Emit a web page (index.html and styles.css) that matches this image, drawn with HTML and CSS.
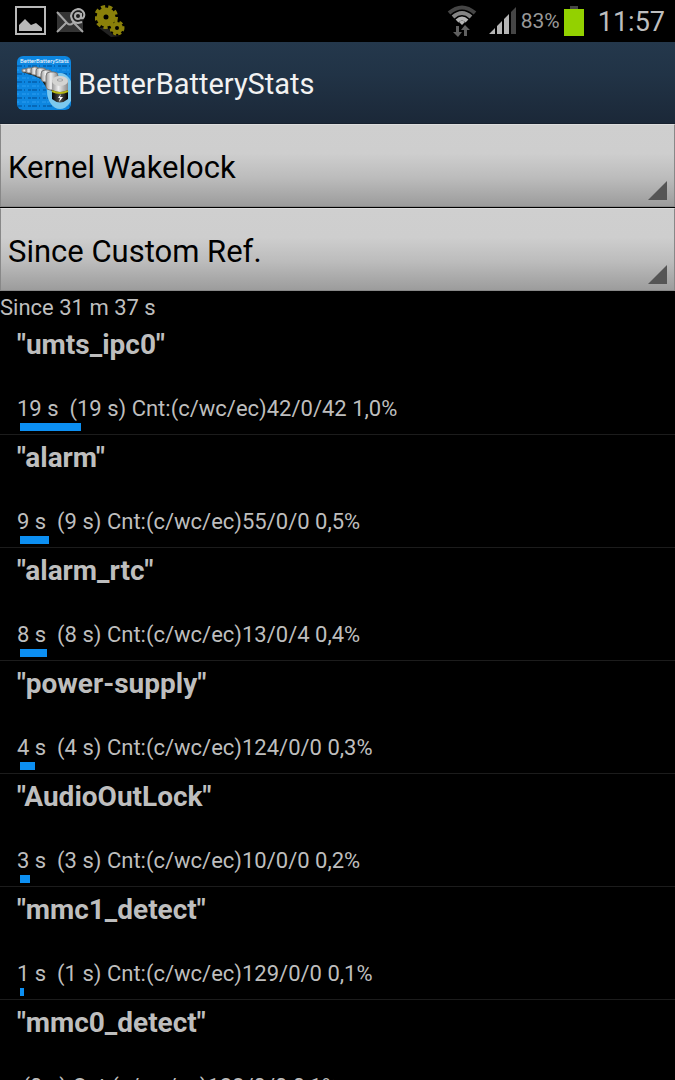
FILE: index.html
```html
<!DOCTYPE html>
<html lang="en">
<head>
  <meta charset="UTF-8">
  <meta name="viewport" content="width=device-width, initial-scale=1">
  <title>BetterBatteryStats</title>
  <link rel="stylesheet" href="styles.css">
</head>
<body>

  <!-- Status bar -->
  <div class="status-bar">
    <div class="notifications">
      <svg width="32" height="30" viewBox="0 0 32 30">
        <rect x="1" y="1" width="29" height="27" fill="none" stroke="#b9b9b9" stroke-width="2"/>
        <path d="M4 25V19L10 13L16 19L21 17L27 22V25Z" fill="#b9b9b9"/>
      </svg>
      <svg width="30" height="26" viewBox="0 0 30 26">
        <path d="M1 4H27V24H1Z" fill="#343434"/>
        <path d="M1 4L11 15Q14 18 17 15L19 13M1 24L10 15M27 24L18 15" fill="none" stroke="#a5a5a5" stroke-width="2"/>
        <circle cx="22" cy="8" r="7" fill="#1c1c1c"/>
        <circle cx="22" cy="8" r="3" fill="none" stroke="#b0b0b0" stroke-width="2"/>
        <path d="M25 5V9Q25 11 27 10Q29 8 28 5Q26 1 22 1Q16 2 15 8Q16 15 22 15L26 14" fill="none" stroke="#b0b0b0" stroke-width="2"/>
      </svg>
      <svg width="30" height="32" viewBox="0 0 30 32">
        <path d="M4 23L12 22L18 30L26 31L16 32Z" fill="#222"/>
        <circle cx="11" cy="12" r="6" fill="none" stroke="#8a800a" stroke-width="7"/>
        <circle cx="11" cy="12" r="10" fill="none" stroke="#8a800a" stroke-width="4" stroke-dasharray="4 3"/>
        <circle cx="22" cy="23" r="4" fill="none" stroke="#8a800a" stroke-width="4"/>
        <circle cx="22" cy="23" r="6" fill="none" stroke="#8a800a" stroke-width="3" stroke-dasharray="3 2"/>
      </svg>
    </div>
    <div class="indicators">
      <svg class="wifi" width="30" height="32" viewBox="0 0 30 32">
        <g fill="none" stroke-width="4">
          <path d="M2 8Q15 -3 28 8" stroke="#454545"/>
          <path d="M6 12Q15 4 24 12" stroke="#858585"/>
          <path d="M10 16Q15 11 20 16" stroke="#b5b5b5"/>
        </g>
        <path d="M12 17L15 20L18 17Q15 14 12 17Z" fill="#b5b5b5"/>
        <path d="M9 21H12V27H15L11 32L6 27H9ZM17 31V25H14L18 20L23 25H20V31Z" fill="#606060"/>
      </svg>
      <svg class="signal" width="28" height="28" viewBox="0 0 28 28">
        <path d="M0 27L6 21V27ZM8 19L13 14V27H8ZM15 12L20 7V27H15Z" fill="#b5b5b5"/>
        <path d="M22 5L27 0V27H22Z" fill="#454545"/>
      </svg>
      <span class="percent">83%</span>
      <svg class="battery" width="20" height="30" viewBox="0 0 20 30">
        <rect x="6" y="0" width="8" height="3" fill="#454545"/>
        <rect x="0" y="3" width="20" height="27" fill="#93d100"/>
      </svg>
      <span class="clock">11:57</span>
    </div>
  </div>

  <!-- Title bar -->
  <header class="title-bar">
    <svg class="app-icon" width="54" height="54" viewBox="0 0 54 54">
      <defs>
        <linearGradient id="metal" x1="0" x2="1" y1="0" y2="0">
          <stop offset="0" stop-color="#999"/>
          <stop offset="0.4" stop-color="#eee"/>
          <stop offset="1" stop-color="#888"/>
        </linearGradient>
        <linearGradient id="cell" x1="0" x2="1" y1="0" y2="0">
          <stop offset="0" stop-color="#000"/>
          <stop offset="0.5" stop-color="#555"/>
          <stop offset="1" stop-color="#000"/>
        </linearGradient>
        <clipPath id="tile"><rect width="54" height="54" rx="6"/></clipPath>
      </defs>
      <g clip-path="url(#tile)">
        <rect width="54" height="54" fill="#0d86e0"/>
        <path d="M0 10H54M0 18H54M0 26H54M0 34H54M0 42H54M0 50H54" stroke="#0668b8" stroke-width="2" stroke-dasharray="5 2 1 3 3 1"/>
        <path d="M0 14H54M0 22H54M0 30H54M0 38H54M0 46H54" stroke="#2c9df0" stroke-width="1" stroke-dasharray="2 3 4 1"/>
        <ellipse cx="43" cy="35" rx="13" ry="18" fill="#7cc8ee"/>
        <!-- row of cells, growing towards the front one -->
        <path d="M5 16L15 19L24 23L29 31L35 35V20L22 12L6 13Z" fill="#161c14"/>
        <g fill="url(#metal)" stroke="#777" stroke-width="1">
          <rect x="5" y="13" width="6" height="3" rx="1"/>
          <rect x="9" y="12" width="7" height="5" rx="2"/>
          <rect x="14" y="11" width="8" height="8" rx="3"/>
          <rect x="19" y="12" width="10" height="9" rx="3"/>
          <rect x="24" y="14" width="11" height="12" rx="4"/>
          <rect x="29" y="16" width="12" height="18" rx="4"/>
        </g>
        <path d="M35 25V43Q43 50 51 43V25Z" fill="url(#cell)"/>
        <path d="M35 24V34Q43 38 51 34V24Z" fill="url(#metal)"/>
        <path d="M35 35Q43 39 51 35" fill="none" stroke="#b5b614" stroke-width="2"/>
        <ellipse cx="43" cy="25" rx="8" ry="5" fill="#d4d4d2"/>
        <ellipse cx="43" cy="24" rx="3" ry="1" fill="#fff" stroke="#999"/>
        <path d="M44 38L41 42H43L42 46L46 41H43Z" fill="#fff"/>
        <text class="icon-label" x="3" y="7">BetterBatteryStats</text>
      </g>
    </svg>
    <h1>BetterBatteryStats</h1>
  </header>

  <!-- Filters -->
  <div class="filters">
    <div class="spinner">
      <select aria-label="Statistic">
        <option>Kernel Wakelock</option>
      </select>
    </div>
    <div class="spinner">
      <select aria-label="Reference">
        <option>Since Custom Ref.</option>
      </select>
    </div>
  </div>

  <p class="since">Since 31 m 37 s</p>

  <ul class="stats">
    <li>
      <h2>"umts_ipc0"</h2>
      <p>19 s&nbsp; (19 s) Cnt:(c/wc/ec)42/0/42 1,0%</p>
      <div class="bar" style="width: 61px"></div>
    </li>
    <li>
      <h2>"alarm"</h2>
      <p>9 s&nbsp; (9 s) Cnt:(c/wc/ec)55/0/0 0,5%</p>
      <div class="bar" style="width: 29px"></div>
    </li>
    <li>
      <h2>"alarm_rtc"</h2>
      <p>8 s&nbsp; (8 s) Cnt:(c/wc/ec)13/0/4 0,4%</p>
      <div class="bar" style="width: 27px"></div>
    </li>
    <li>
      <h2>"power-supply"</h2>
      <p>4 s&nbsp; (4 s) Cnt:(c/wc/ec)124/0/0 0,3%</p>
      <div class="bar" style="width: 15px"></div>
    </li>
    <li>
      <h2>"AudioOutLock"</h2>
      <p>3 s&nbsp; (3 s) Cnt:(c/wc/ec)10/0/0 0,2%</p>
      <div class="bar" style="width: 10px"></div>
    </li>
    <li>
      <h2>"mmc1_detect"</h2>
      <p>1 s&nbsp; (1 s) Cnt:(c/wc/ec)129/0/0 0,1%</p>
      <div class="bar" style="width: 4px"></div>
    </li>
    <li>
      <h2>"mmc0_detect"</h2>
      <p>&nbsp;(0 s) Cnt:(c/wc/ec)128/0/0 0,1%</p>
      <div class="bar" style="width: 2px"></div>
    </li>
  </ul>

</body>
</html>
```

FILE: styles.css
```css
* {
  box-sizing: border-box;
}

body {
  display: flex;
  flex-direction: column;
  height: 100vh;
  margin: 0;
  background-color: #000;
  color: #bebebe;
  font-family: Roboto, sans-serif;
  overflow: hidden;
}

h1, h2, p, ul {
  margin: 0;
  padding: 0;
  font-weight: normal;
}

.status-bar {
  display: flex;
  flex-shrink: 0;
  justify-content: space-between;
  align-items: center;
  height: 42px;
  padding: 0 10px 0 15px;
}

.notifications,
.indicators {
  display: flex;
  align-items: center;
}

.notifications {
  gap: 9px;
}

.wifi {
  margin-right: 12px;
}

.percent {
  margin: 0 4px;
  color: #999;
  font-size: 21px;
}

.clock {
  margin-left: 14px;
  padding-top: 2px;
  font-size: 27px;
}

.title-bar {
  display: flex;
  flex-shrink: 0;
  align-items: center;
  gap: 7px;
  height: 82px;
  padding: 0 17px;
  background: linear-gradient(#24384c, #213346 40%, #1b2838);
  border-bottom: 1px solid #17212e;
}

.title-bar h1 {
  padding-top: 2px;
  color: #f2f2f2;
  font-size: 29px;
}

.icon-label {
  fill: #fff;
  font-size: 6px;
}

.filters {
  display: flex;
  flex-direction: column;
  flex-shrink: 0;
  gap: 1px;
}

.spinner {
  position: relative;
}

.spinner::after {
  content: "";
  position: absolute;
  right: 8px;
  bottom: 7px;
  width: 19px;
  height: 19px;
  background-color: #555;
  clip-path: polygon(100% 0, 100% 100%, 0 100%);
  pointer-events: none;
}

.spinner select {
  display: block;
  width: 100%;
  height: 83px;
  padding: 3px 7px 0;
  border: 1px solid #888;
  border-top-color: #ddd;
  border-radius: 0;
  background: linear-gradient(#cfcfcf 0%, #cecece 35%, #bcbcbc 65%, #9c9c9c 100%);
  color: #000;
  font-family: inherit;
  font-size: 31px;
  appearance: none;
}

.since {
  flex-shrink: 0;
  padding-top: 3px;
  font-size: 22px;
  line-height: 28px;
}

.stats {
  flex: 1;
  min-height: 0;
  overflow: hidden;
  list-style: none;
}

.stats li {
  height: 113px;
  padding: 8px 17px 0;
  border-bottom: 1px solid #1c1c1c;
}

.stats h2 {
  margin-bottom: 36px;
  font-size: 28px;
  font-weight: bold;
  line-height: 30px;
}

.stats p {
  font-size: 22px;
  line-height: 26px;
}

.bar {
  height: 8px;
  margin: 1px 3px 0;
  background-color: #0c8ff2;
}
```
